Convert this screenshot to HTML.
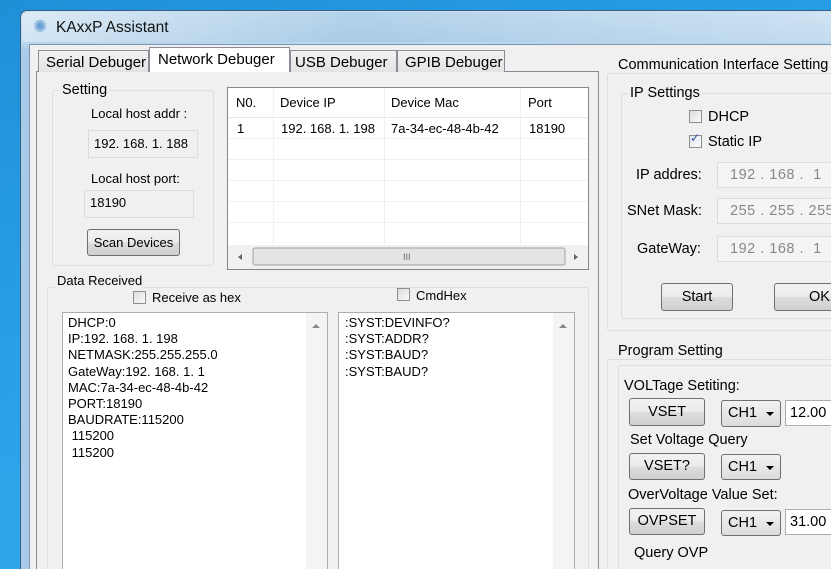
<!DOCTYPE html>
<html style="overflow:hidden;width:831px;height:569px"><head><meta charset="utf-8"><style>
*{margin:0;padding:0;box-sizing:border-box}
body{width:831px;height:569px;overflow:hidden;position:relative;font-family:"Liberation Sans",sans-serif;font-size:14.5px;color:#000;background:linear-gradient(160deg,#1f8fd8 0%,#2aa3ea 50%,#39a9ea 100%)}
.a{position:absolute;white-space:nowrap}
.grp{position:absolute;border:1px solid #d5dfe5;border-radius:3px}
.lbl{position:absolute;background:#f0f0f0;padding:0 2px;line-height:16px}
.inp{position:absolute;background:#f0f0f0;border:1px solid #d9dde2;padding-left:5px;line-height:24px;color:#000}
.btn{position:absolute;border:1px solid #707070;border-radius:3px;background:linear-gradient(#f2f2f2 0%,#ebebeb 50%,#dddddd 51%,#cfcfcf 100%);text-align:center;font-size:14.5px}
.cb{position:absolute;width:13px;height:13px;border:1px solid #8f8f8f;background:linear-gradient(135deg,#dcdcdc,#fafafa)}
.combo{position:absolute;border:1px solid #707070;border-radius:3px;background:linear-gradient(#f2f2f2,#dcdcdc);padding-left:6px;line-height:24px}
.combo:after{content:"";position:absolute;right:6px;top:11px;border:4px solid transparent;border-top:4px solid #000}
.ta{position:absolute;background:#fff;border:1px solid #abadb3}
.tx{font-size:13px;line-height:16px}
.ip{position:absolute;background:#f4f4f4;border:1px solid #d9dde2;color:#888;line-height:24px;font-size:14.5px;letter-spacing:.5px}
.tab{position:absolute;top:50px;height:22px;border:1px solid #898c95;border-bottom:none;background:linear-gradient(#f2f2f2,#e3e3e3);padding:3px 0 0 7px;font-size:15px}
</style></head><body>
<div class="a" style="left:20px;top:10px;width:830px;height:580px;border:1px solid #3a5f80;border-radius:7px 7px 0 0;background:linear-gradient(180deg,#c9e0f2 0px,#b8d5ec 34px,#a7cbe8 40px)"></div>
<div class="a" style="left:22px;top:12px;width:826px;height:30px;background:linear-gradient(90deg,rgba(255,255,255,.35),rgba(120,170,210,.25) 40%,rgba(255,255,255,.15));border-radius:6px 6px 0 0"></div>
<div class="a" style="left:33px;top:17px;font-size:17px;color:#6a9fd4">✺</div>
<div class="a" style="left:56px;top:19px;font-size:15.5px;color:#111">KAxxP Assistant</div>
<div class="a" style="left:29px;top:44px;width:810px;height:530px;background:#f0f0f0;border:1px solid #7c96ad"></div>

<div class="a" style="left:36px;top:71px;width:563px;height:510px;border:1px solid #898c95;background:#f0f0f0"></div>
<div class="tab" style="left:38px;width:111px">Serial Debuger</div>
<div class="a" style="left:149px;top:47px;width:141px;height:25px;border:1px solid #898c95;border-bottom:none;background:#fff;padding:3px 0 0 8px;font-size:15px">Network Debuger</div>
<div class="tab" style="left:290px;width:107px;padding-left:4px">USB Debuger</div>
<div class="tab" style="left:397px;width:108px">GPIB Debuger</div>

<div class="grp" style="left:52px;top:90px;width:162px;height:176px"></div>
<div class="lbl" style="left:60px;top:82px">Setting</div>
<div class="a tx" style="left:91px;top:106px">Local host addr :</div>
<div class="inp tx" style="left:88px;top:130px;width:110px;height:28px;line-height:26px">192. 168. 1. 188</div>
<div class="a tx" style="left:91px;top:171px">Local host port:</div>
<div class="inp tx" style="left:84px;top:190px;width:110px;height:28px;line-height:24px">18190</div>
<div class="btn tx" style="left:87px;top:229px;width:93px;height:27px;line-height:25px">Scan Devices</div>

<div class="a" style="left:227px;top:87px;width:362px;height:183px;border:1px solid #828790;background:#fff"></div>
<svg class="a" style="left:228px;top:88px" width="360" height="181">
<g stroke="#f0f0f0" stroke-width="1">
<line x1="0" y1="29.5" x2="360" y2="29.5" stroke="#e5e5e5"/>
<line x1="0" y1="50.5" x2="360" y2="50.5"/><line x1="0" y1="71.5" x2="360" y2="71.5"/><line x1="0" y1="92.5" x2="360" y2="92.5"/><line x1="0" y1="113.5" x2="360" y2="113.5"/><line x1="0" y1="134.5" x2="360" y2="134.5"/>
<line x1="45.5" y1="0" x2="45.5" y2="157"/><line x1="156.5" y1="0" x2="156.5" y2="157"/><line x1="292.5" y1="0" x2="292.5" y2="157"/>
</g>
<rect x="0" y="157" width="360" height="24" fill="#f0f0f0"/>
<rect x="25" y="160" width="312" height="17" rx="2" fill="#e4e4e4" stroke="#a0a0a0"/>
<text x="175" y="172" font-size="9" fill="#666">III</text>
<path d="M10 169 l4 -3 v6z" fill="#606060"/><path d="M350 169 l-4 -3 v6z" fill="#606060"/>
</svg>
<div class="a tx" style="left:236px;top:95px">N0.</div>
<div class="a tx" style="left:280px;top:95px">Device IP</div>
<div class="a tx" style="left:391px;top:95px">Device Mac</div>
<div class="a tx" style="left:528px;top:95px">Port</div>
<div class="a tx" style="left:237px;top:121px">1</div>
<div class="a tx" style="left:281px;top:121px">192. 168. 1. 198</div>
<div class="a tx" style="left:391px;top:121px">7a-34-ec-48-4b-42</div>
<div class="a tx" style="left:529px;top:121px">18190</div>

<div class="grp" style="left:47px;top:287px;width:542px;height:300px"></div>
<div class="lbl tx" style="left:55px;top:273px">Data Received</div>
<div class="cb" style="left:133px;top:291px"></div>
<div class="a tx" style="left:152px;top:290px">Receive as hex</div>
<div class="cb" style="left:397px;top:288px"></div>
<div class="a tx" style="left:416px;top:288px">CmdHex</div>
<div class="ta" style="left:62px;top:312px;width:266px;height:270px"></div>
<div class="a" style="left:306px;top:313px;width:21px;height:268px;background:#f4f4f4"></div>
<div class="a" style="left:312px;top:320px;border:4px solid transparent;border-bottom:4px solid #888"></div>
<div class="a tx" style="left:68px;top:315px;line-height:16.2px">DHCP:0<br>IP:192. 168. 1. 198<br>NETMASK:255.255.255.0<br>GateWay:192. 168. 1. 1<br>MAC:7a-34-ec-48-4b-42<br>PORT:18190<br>BAUDRATE:115200<br>&nbsp;115200<br>&nbsp;115200</div>
<div class="ta" style="left:338px;top:312px;width:237px;height:270px"></div>
<div class="a" style="left:553px;top:313px;width:21px;height:268px;background:#f4f4f4"></div>
<div class="a" style="left:559px;top:320px;border:4px solid transparent;border-bottom:4px solid #888"></div>
<div class="a tx" style="left:345px;top:315px;line-height:16.2px">:SYST:DEVINFO?<br>:SYST:ADDR?<br>:SYST:BAUD?<br>:SYST:BAUD?</div>

<div class="grp" style="left:607px;top:73px;width:240px;height:258px"></div>
<div class="lbl" style="left:616px;top:57px">Communication Interface Setting</div>
<div class="grp" style="left:621px;top:93px;width:230px;height:226px"></div>
<div class="lbl" style="left:628px;top:85px">IP Settings</div>
<div class="cb" style="left:689px;top:110px"></div>
<div class="a" style="left:708px;top:109px">DHCP</div>
<div class="cb" style="left:689px;top:135px;background:linear-gradient(135deg,#e0e6ee,#fafafa)"></div>
<div class="a" style="left:690px;top:131px;font-size:12px;color:#2e4f9e">✓</div>
<div class="a" style="left:708px;top:134px">Static IP</div>
<div class="a" style="left:636px;top:167px">IP addres:</div>
<div class="ip" style="left:717px;top:162px;width:130px;height:26px;padding-left:12px">192 . 168 .&nbsp;&nbsp;1</div>
<div class="a" style="left:627px;top:203px">SNet Mask:</div>
<div class="ip" style="left:717px;top:198px;width:130px;height:26px;padding-left:12px">255 . 255 . 255</div>
<div class="a" style="left:637px;top:241px">GateWay:</div>
<div class="ip" style="left:717px;top:236px;width:130px;height:26px;padding-left:12px">192 . 168 .&nbsp;&nbsp;1</div>
<div class="btn" style="left:661px;top:283px;width:72px;height:28px;line-height:26px">Start</div>
<div class="btn" style="left:774px;top:283px;width:80px;height:28px;line-height:26px;text-align:left;padding-left:34px">OK</div>

<div class="grp" style="left:607px;top:359px;width:240px;height:230px"></div>
<div class="lbl" style="left:616px;top:343px">Program Setting</div>
<div class="grp" style="left:618px;top:365px;width:230px;height:220px"></div>
<div class="a" style="left:624px;top:378px">VOLTage Setiting:</div>
<div class="btn" style="left:629px;top:398px;width:76px;height:28px;line-height:26px">VSET</div>
<div class="combo" style="left:721px;top:400px;width:60px;height:27px">CH1</div>
<div class="a" style="left:785px;top:400px;width:60px;height:26px;background:#fff;border:1px solid #abadb3;padding-left:4px;line-height:24px">12.00</div>
<div class="a" style="left:630px;top:432px">Set Voltage Query</div>
<div class="btn" style="left:629px;top:453px;width:76px;height:27px;line-height:25px">VSET?</div>
<div class="combo" style="left:721px;top:454px;width:60px;height:26px">CH1</div>
<div class="a" style="left:628px;top:487px">OverVoltage Value Set:</div>
<div class="btn" style="left:629px;top:508px;width:76px;height:27px;line-height:25px">OVPSET</div>
<div class="combo" style="left:721px;top:510px;width:60px;height:26px">CH1</div>
<div class="a" style="left:785px;top:509px;width:60px;height:26px;background:#fff;border:1px solid #abadb3;padding-left:4px;line-height:24px">31.00</div>
<div class="a" style="left:634px;top:545px">Query OVP</div>
</body></html>
